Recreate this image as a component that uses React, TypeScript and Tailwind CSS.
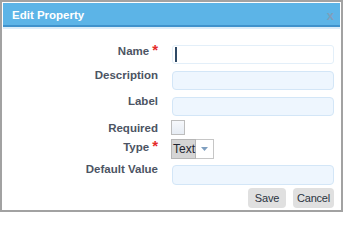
import React from "react";

const font = { fontFamily: '"Liberation Sans", Arial, sans-serif' };

function Label({ text, req, mt }: { text: string; req?: boolean; mt: string }) {
  return (
    <div
      className={`w-[155px] shrink-0 text-right text-[11.5px] leading-[13px] font-bold text-[#4c5463] ${mt}`}
    >
      {text}
      {req && (
        <span className="ml-[3px] text-[15px] leading-[0px] text-[#e52b2b] align-baseline">*</span>
      )}
    </div>
  );
}

export default function App() {
  return (
    <div
      className="w-[343px] h-[212px] overflow-hidden border-2 border-[#a2a2a2] bg-white p-px flex flex-col"
      style={font}
    >
      <div className="h-[24px] shrink-0 bg-[#5cb4e7] border-b-2 border-[#3f92cc] flex items-start justify-between pl-[9px] pr-[6px] pt-[6px]">
        <span className="text-white font-bold text-[11.5px] leading-[13px]">Edit Property</span>
        <span className="text-[#7f9fbb] font-bold text-[13px] leading-[13px]">x</span>
      </div>
      <div className="h-[2px] shrink-0 bg-[#dcedf9]" />

      <div className="flex flex-col">
        {/* Name */}
        <div className="flex items-start mt-[16px] h-[19px]">
          <Label text="Name" req mt="mt-0" />
          <div className="ml-[14px] w-[162px] h-[19px] rounded-[3px] border border-[#e3eff9] bg-white flex items-center pl-[2px]">
            <div className="w-[2px] h-[15px] bg-[#2f4a66]" />
          </div>
        </div>
        {/* Description */}
        <div className="flex items-start mt-[7px] h-[19px]">
          <Label text="Description" mt="-mt-[2px]" />
          <div className="ml-[14px] w-[162px] h-[19px] rounded-[4px] border border-[#d3e6f7] bg-[#eef6fe]" />
        </div>
        {/* Label */}
        <div className="flex items-start mt-[7px] h-[19px]">
          <Label text="Label" mt="-mt-[2px]" />
          <div className="ml-[14px] w-[162px] h-[19px] rounded-[4px] border border-[#d3e6f7] bg-[#eef6fe]" />
        </div>
        {/* Required */}
        <div className="flex items-start mt-[4px] h-[15px]">
          <Label text="Required" mt="mt-[2px]" />
          <div className="ml-[13px] w-[14px] h-[15px] border border-[#bdbdbd] bg-gradient-to-b from-[#f6f8fb] to-[#e6ecf4]" />
        </div>
        {/* Type */}
        <div className="flex items-start mt-[4px] h-[20px]">
          <Label text="Type" req mt="mt-[2px]" />
          <div className="ml-[13px] h-[20px] flex">
            <div className="w-[25px] h-[20px] bg-[#d5d5d5] border border-[#b6b6b6] flex items-center pl-[1px] text-[12px] text-[#1f2530]">
              Text
            </div>
            <div className="w-[18px] h-[20px] bg-white border border-l-0 border-[#c6c6c6] flex items-center justify-center">
              <svg width="7" height="4" viewBox="0 0 7 4">
                <path d="M0 0 L7 0 L3.5 4 Z" fill="#7f9fc0" />
              </svg>
            </div>
          </div>
        </div>
        {/* Default Value */}
        <div className="flex items-start mt-[6px] h-[20px]">
          <Label text="Default Value" mt="-mt-[2px]" />
          <div className="ml-[14px] w-[162px] h-[20px] rounded-[4px] border border-[#d3e6f7] bg-[#eef6fe]" />
        </div>
        {/* Buttons */}
        <div className="flex justify-end gap-[7px] mt-[3px] pr-[6px]">
          <button className="w-[38px] h-[20px] rounded-[4px] bg-[#e0e0e0] text-[11px] tracking-[-0.2px] text-[#2b3440] flex items-center justify-center">
            Save
          </button>
          <button className="w-[41px] h-[20px] rounded-[4px] bg-[#e0e0e0] text-[11px] tracking-[-0.2px] text-[#2b3440] flex items-center justify-center">
            Cancel
          </button>
        </div>
      </div>
    </div>
  );
}
